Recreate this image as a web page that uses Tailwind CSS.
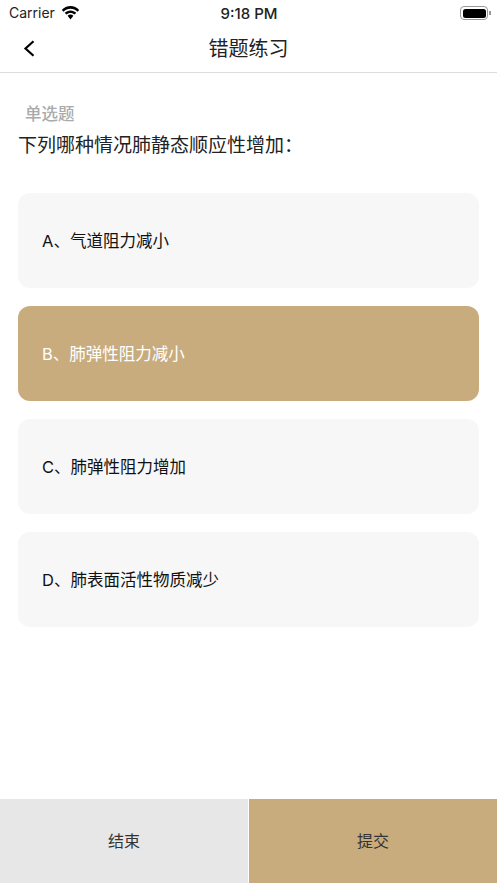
<!DOCTYPE html>
<html lang="zh">
<head>
  <meta charset="UTF-8">
  <meta name="viewport" content="width=device-width, initial-scale=1.0">
  <title>错题练习</title>
  <script src="https://cdn.jsdelivr.net/npm/@tailwindcss/browser@4"></script>
</head>
<body class="bg-white text-black font-['Inter','Noto_Sans_CJK_SC',sans-serif]">
<div class="w-[497px] h-[883px] flex flex-col overflow-hidden">

  <!-- Status bar -->
  <div class="h-[26px] flex items-center justify-between pl-[9px] pr-[6px] shrink-0">
    <div class="flex items-center gap-[6px] w-[120px]">
      <span class="text-[14px] leading-none text-[#222]">Carrier</span>
      <svg class="-mt-[1px]" width="19" height="14" viewBox="0 0 19 14" fill="#000">
        <path d="M9.500 2.800c2.700 0 5.200 1 7 2.900l1.700-1.800C15.900 1.500 12.900 0 9.500 0S3.100 1.500.8 3.900l1.700 1.800c1.800-1.900 4.300-2.900 7-2.900z"/>
        <path d="M9.500 7c1.600 0 3 .6 4.100 1.600l1.700-1.800C13.800 5.300 11.800 4.400 9.500 4.400s-4.300.9-5.800 2.400l1.700 1.800C6.500 7.600 7.900 7 9.500 7z"/>
        <path d="M9.500 8.600c-1.100 0-2.100.4-2.900 1.200l2.900 3.700 2.900-3.700c-.8-.8-1.800-1.200-2.900-1.200z"/>
      </svg>
    </div>
    <span class="text-[15px] leading-none font-medium text-[#222] -ml-[2px]">9:18 PM</span>
    <div class="w-[120px] flex justify-end items-center">
      <div class="w-[28px] h-[14px] rounded-[4px] border border-[#999] p-[1.500px]">
        <div class="w-full h-full rounded-[2.500px] bg-black"></div>
      </div>
      <div class="w-[1.500px] h-[4px] bg-[#999] ml-[1px]"></div>
    </div>
  </div>

  <!-- Nav bar -->
  <div class="h-[47px] relative flex items-center justify-center border-b border-[#dcdcdc] shrink-0">
    <svg class="absolute left-[23px] top-[14px]" width="12" height="17" viewBox="0 0 12 17" fill="none" stroke="#000" stroke-width="2.200">
      <path d="M10.500 1.200 2.500 8.500l8 7.300"/>
    </svg>
    <span class="text-[20px] text-[#222]">错题练习</span>
  </div>

  <!-- Question -->
  <div class="flex-1 px-[18px]">
    <p class="pl-[7px] pt-[31px] text-[16.500px] leading-[20px] font-medium text-[#aaaaaa]">单选题</p>
    <p class="mt-[8px] text-[19px] leading-[28px] text-[#222]">下列哪种情况肺静态顺应性增加：</p>
    <div class="mt-[33px] flex flex-col gap-[18px]">
      <div class="h-[95px] rounded-[12px] bg-[#f7f7f7] flex items-center pl-[24px] pt-[1px] text-[16.500px] text-[#111]">A、气道阻力减小</div>
      <div class="h-[95px] rounded-[12px] bg-[#c9ac7d] flex items-center pl-[24px] pt-[1px] text-[16.500px] text-white">B、肺弹性阻力减小</div>
      <div class="h-[95px] rounded-[12px] bg-[#f7f7f7] flex items-center pl-[24px] pt-[1px] text-[16.500px] text-[#111]">C、肺弹性阻力增加</div>
      <div class="h-[95px] rounded-[12px] bg-[#f7f7f7] flex items-center pl-[24px] pt-[1px] text-[16.500px] text-[#111]">D、肺表面活性物质减少</div>
    </div>
  </div>

  <!-- Bottom buttons -->
  <div class="h-[84px] flex shrink-0">
    <div class="w-[248px] bg-[#e7e7e7] flex items-center justify-center text-[16px] text-[#333]">结束</div>
    <div class="flex-1 ml-[1px] bg-[#c9ac7d] flex items-center justify-center text-[16px] text-[#333]">提交</div>
  </div>
</div>
</body>
</html>
